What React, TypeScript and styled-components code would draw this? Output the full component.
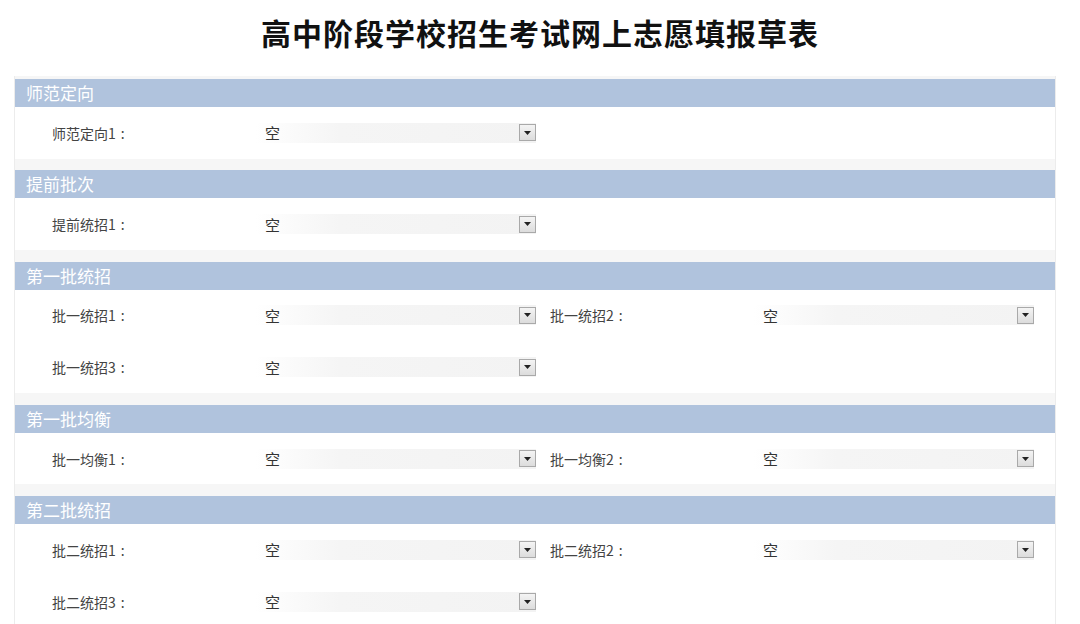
import React from 'react';
import styled, { createGlobalStyle } from 'styled-components';

const GlobalStyle = createGlobalStyle`
    html, body {
        margin: 0;
        padding: 0;
        background: #ffffff;
    }
    body {
        font-family: 'Noto Sans CJK SC', 'Noto Sans', sans-serif;
        color: #333;
    }
`;

type Field = { label: string };
type Section = { title: string; rows: Field[][] };

const sections: Section[] = [
    { title: '师范定向', rows: [[{ label: '师范定向1' }]] },
    { title: '提前批次', rows: [[{ label: '提前统招1' }]] },
    {
        title: '第一批统招',
        rows: [[{ label: '批一统招1' }, { label: '批一统招2' }], [{ label: '批一统招3' }]],
    },
    {
        title: '第一批均衡',
        rows: [[{ label: '批一均衡1' }, { label: '批一均衡2' }]],
    },
    {
        title: '第二批统招',
        rows: [[{ label: '批二统招1' }, { label: '批二统招2' }], [{ label: '批二统招3' }]],
    },
];

const Page = styled.div`
    width: 1080px;
    height: 624px;
    overflow: hidden;
`;

const Title = styled.h1`
    margin: 0;
    height: 76px;
    display: flex;
    align-items: center;
    justify-content: center;
    padding: 0 0 12px 0;
    box-sizing: border-box;
    font-family: 'Noto Sans CJK SC', sans-serif;
    font-size: 30px;
    font-weight: 700;
    color: #111;
    letter-spacing: 1px;
`;

const Panel = styled.div`
    margin: 0 24px 0 14px;
    padding-top: 3px;
    background: #f6f6f6;
    border-left: 1px solid #ececec;
    border-right: 1px solid #ececec;
    display: flex;
    flex-direction: column;
    gap: 11.5px;
`;

const Block = styled.section`
    background: #fff;
`;

const Header = styled.div`
    height: 28px;
    line-height: 28px;
    padding-left: 11px;
    background: #b0c3dd;
    color: #fff;
    font-size: 17px;
`;

const Row = styled.div`
    height: 51.8px;
    display: flex;
    align-items: center;
    padding-left: 37px;
    gap: 14px;
`;

const FieldWrap = styled.div`
    display: flex;
    align-items: center;
    width: 484px;
`;

const Label = styled.span`
    width: 203px;
    font-size: 14px;
    color: #444;
`;

const Colon = styled.span`
    margin-left: 5px;
`;

const Select = styled.div`
    width: 281px;
    height: 20px;
    display: flex;
    align-items: center;
    justify-content: space-between;
    background: linear-gradient(to right, #ffffff 0%, #f5f5f5 30%, #f3f3f3 100%);
    padding-left: 10px;
    box-sizing: border-box;
    font-size: 15px;
    color: #333;
`;

const DropButton = styled.span`
    width: 17px;
    height: 17px;
    box-sizing: border-box;
    border: 1px solid #a9a9a9;
    background: linear-gradient(#f4f4f4, #dcdcdc);
    display: flex;
    align-items: center;
    justify-content: center;
`;

const Caret = () => (
    <svg width="7" height="4" viewBox="0 0 7 4">
        <path d="M0 0h7L3.5 4z" fill="#222" />
    </svg>
);

export default function App() {
    return (
        <Page>
            <GlobalStyle />
            <Title>高中阶段学校招生考试网上志愿填报草表</Title>
            <Panel>
                {sections.map((s) => (
                    <Block key={s.title}>
                        <Header>{s.title}</Header>
                        {s.rows.map((row, i) => (
                            <Row key={i}>
                                {row.map((f) => (
                                    <FieldWrap key={f.label}>
                                        <Label>
                                            {f.label}
                                            <Colon>:</Colon>
                                        </Label>
                                        <Select>
                                            空
                                            <DropButton>
                                                <Caret />
                                            </DropButton>
                                        </Select>
                                    </FieldWrap>
                                ))}
                            </Row>
                        ))}
                    </Block>
                ))}
            </Panel>
        </Page>
    );
}
